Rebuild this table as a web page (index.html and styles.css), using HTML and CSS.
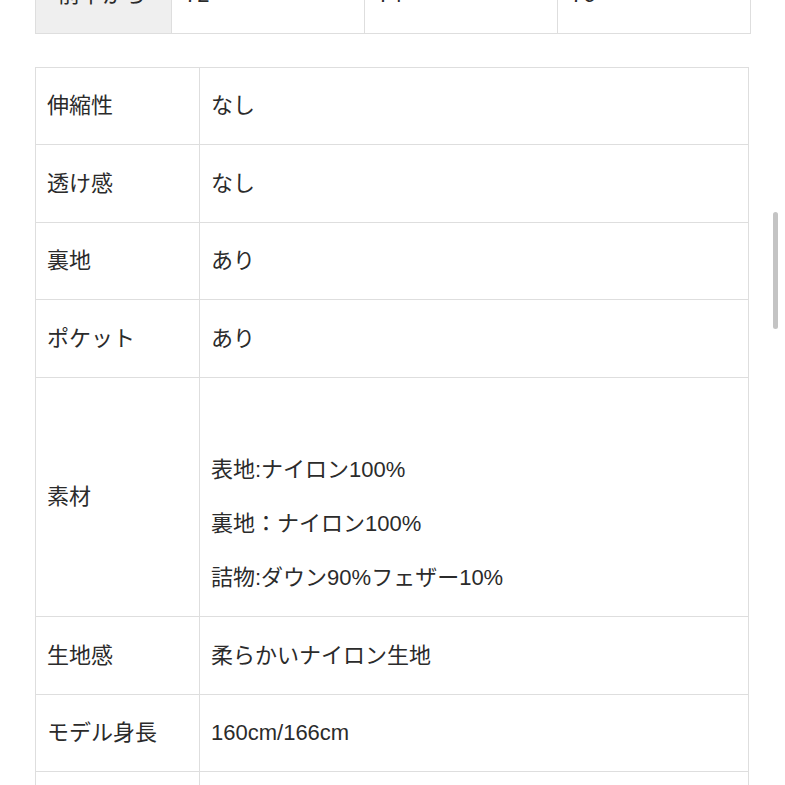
FILE: index.html
```html
<!DOCTYPE html>
<html lang="ja">
<head>
<meta charset="utf-8">
<link rel="stylesheet" href="styles.css">
</head>
<body>
<div class="page">
  <table class="size-table">
    <tr>
      <th class="size-head">前中から</th>
      <td class="size-cell">72</td>
      <td class="size-cell">74</td>
      <td class="size-cell">76</td>
    </tr>
  </table>

  <table class="spec-table">
    <tr><th>伸縮性</th><td>なし</td></tr>
    <tr><th>透け感</th><td>なし</td></tr>
    <tr><th>裏地</th><td>あり</td></tr>
    <tr><th>ポケット</th><td>あり</td></tr>
    <tr><th>素材</th><td><br><br>表地:ナイロン100%<br><br>裏地：ナイロン100%<br><br>詰物:ダウン90%フェザー10%</td></tr>
    <tr><th>生地感</th><td>柔らかいナイロン生地</td></tr>
    <tr><th>モデル身長</th><td>160cm/166cm</td></tr>
    <tr><th>&nbsp;</th><td>&nbsp;</td></tr>
  </table>
</div>
<div class="scrollbar"></div>
</body>
</html>
```

FILE: styles.css
```css
html, body {
  margin: 0;
  padding: 0;
  background: #ffffff;
  overflow: hidden;
}

body {
  font-family: "Liberation Sans", "Noto Sans CJK JP", sans-serif;
  color: #2b2b2b;
  font-size: 22px;
  height: 785px;
}

.page {
  padding-left: 35px;
  width: 714px;
}

table {
  border-collapse: collapse;
  width: 714px;
  table-layout: fixed;
}

th, td {
  box-sizing: border-box;
  border: 1px solid #dedede;
  text-align: left;
  font-weight: normal;
  vertical-align: middle;
  line-height: 27px;
  padding: 24.75px 11px 24.75px 11px;
}

.size-table {
  margin-top: -45px;
}

.size-head {
  width: 136px;
  background: #efefef;
  padding-left: 22px;
}

.size-cell {
  width: 193px;
  padding-left: 13px;
}

.spec-table {
  margin-top: 33px;
}

.spec-table th {
  width: 164px;
}

.scrollbar {
  position: absolute;
  left: 773px;
  top: 212px;
  width: 5px;
  height: 117px;
  border-radius: 3px;
  background: #c4c4c4;
}
```
